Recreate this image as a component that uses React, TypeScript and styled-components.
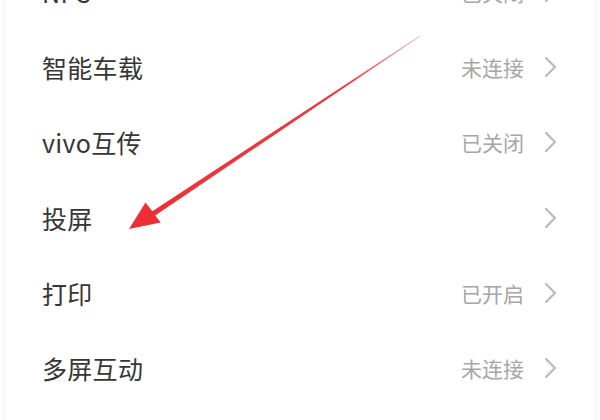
import React from 'react';
import styled, { createGlobalStyle } from 'styled-components';

const GlobalStyle = createGlobalStyle`
  html, body {
    margin: 0;
    padding: 0;
    background: #ffffff;
  }
  body {
    font-family: "Noto Sans CJK SC", "Noto Sans", sans-serif;
  }
`;

const Page = styled.div`
  position: relative;
  width: 600px;
  height: 420px;
  overflow: hidden;
  background: #ffffff;
`;

const Panel = styled.div`
  display: flow-root;
  margin: 0 4px 0 3px;
  height: 100%;
  border-left: 1px solid #f3f3f3;
  border-right: 1px solid #f3f3f3;
`;

const List = styled.ul`
  list-style: none;
  margin: -46px 0 0 0;
  padding: 0;
`;

const Row = styled.li`
  display: flex;
  align-items: center;
  height: 75.3px;
  padding: 0 38px 0 38px;
`;

const Title = styled.span`
  flex: 1;
  font-size: 25px;
  color: #363636;
  letter-spacing: 0.3px;
`;

const Status = styled.span`
  font-size: 21px;
  color: #a6a6a6;
  margin-right: 20px;
`;

const Chevron = styled.svg`
  width: 13px;
  height: 22px;
  flex: none;
`;

const Arrow = styled.svg`
  position: absolute;
  left: 0;
  top: 0;
  width: 600px;
  height: 420px;
  pointer-events: none;
`;

const items = [
  { title: 'NFC', status: '已关闭' },
  { title: '智能车载', status: '未连接' },
  { title: 'vivo互传', status: '已关闭' },
  { title: '投屏', status: '' },
  { title: '打印', status: '已开启' },
  { title: '多屏互动', status: '未连接' },
];

const App = () => {
  return (
    <Page>
      <GlobalStyle />
      <Panel>
        <List>
          {items.map((it) => (
            <Row key={it.title}>
              <Title>{it.title}</Title>
              {it.status && <Status>{it.status}</Status>}
              <Chevron viewBox="0 0 13 22">
                <path d="M2 2 L11 11 L2 20" fill="none" stroke="#b9b9b9" strokeWidth="2.2" strokeLinecap="round" strokeLinejoin="round" />
              </Chevron>
            </Row>
          ))}
        </List>
      </Panel>
      <Arrow viewBox="0 0 600 420">
        <defs>
          <linearGradient id="fade" x1="420" y1="36" x2="130" y2="228" gradientUnits="userSpaceOnUse">
            <stop offset="0" stopColor="#f4a0a8" />
            <stop offset="0.25" stopColor="#ea3d45" />
            <stop offset="1" stopColor="#ee2e34" />
          </linearGradient>
        </defs>
        <polygon
          points="419.8,35.8 152.4,211.2 145.5,202.5 129,229 160.8,222.5 155.2,215.4 420.2,36.3"
          fill="url(#fade)"
        />
      </Arrow>
    </Page>
  );
};

export default App;
